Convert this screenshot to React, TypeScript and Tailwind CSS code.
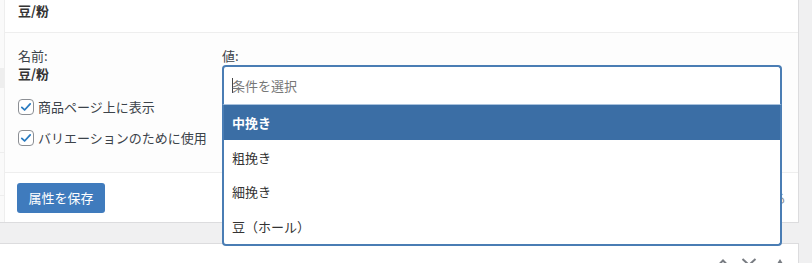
import type { ReactNode } from "react";

const options = ["中挽き", "粗挽き", "細挽き", "豆（ホール）"];

function CheckRow({ children, className }: { children: ReactNode; className?: string }) {
  return (
    <label className={`flex h-[20px] items-center gap-[4px] text-[13px] leading-[20px] text-[#3c434a] ${className ?? ""}`}>
      <span className="flex h-[16px] w-[16px] items-center justify-center rounded-[4px] border border-[#8c8f94] bg-white">
        <svg viewBox="0 0 16 16" className="h-[14px] w-[14px]">
          <path d="M3.2 8.4 6.4 11.4 12.8 4.4" fill="none" stroke="#2a7bc0" strokeWidth="2" strokeLinecap="round" strokeLinejoin="round" />
        </svg>
      </span>
      {children}
    </label>
  );
}

function HandleIcon({ kind }: { kind: "up" | "down" | "toggle" }) {
  return (
    <svg viewBox="0 0 20 20" className="h-[20px] w-[20px]">
      {kind === "up" && <path d="M5 13.5 10 8.5 15 13.5" fill="none" stroke="#787c82" strokeWidth="2" />}
      {kind === "down" && <path d="M3.5 7 10 13 16.5 7" fill="none" stroke="#787c82" strokeWidth="2" />}
      {kind === "toggle" && <path d="M6 13.5 10 7 14 13.5Z" fill="#787c82" />}
    </svg>
  );
}

export default function App() {
  return (
    <div className="h-[263px] w-[812px] overflow-hidden bg-[#f0f0f1] font-['Noto_Sans_CJK_JP','Noto_Sans',sans-serif]">
      {/* product data box */}
      <div className="flex w-[799px] border-r border-b border-[#dcdcde] bg-white">
        {/* tabs column (cut off) */}
        <div className="flex w-[5px] flex-col border-r border-[#eee] bg-[#fafafa]">
          <div className="h-[68px]" />
          <div className="h-[20px] bg-[#eee]" />
          <div className="h-[65px] border-b border-[#eee]" />
          <div className="h-[43px] border-b border-[#eee]" />
        </div>

        <div className="flex flex-1 flex-col">
          <div className="h-[33px] border-b border-[#eee] pt-[3px] pl-[13px] text-[13px] font-bold leading-[16px] text-[#333]">
            豆/粉
          </div>

          <div className="flex h-[140px] border-b border-[#eee] bg-[#fdfdfd] pt-[14px]">
            <div className="w-[217px] pl-[13px]">
              <div className="text-[13px] leading-[18px] text-[#3c434a]">名前:</div>
              <div className="text-[13px] font-bold leading-[18px] text-[#333]">豆/粉</div>
              <CheckRow className="mt-[14px]">商品ページ上に表示</CheckRow>
              <CheckRow className="mt-[11px]">バリエーションのために使用</CheckRow>
            </div>

            <div className="relative z-10 flex-1 pr-[16px]">
              <div className="text-[13px] leading-[18px] text-[#3c434a]">値:</div>
              <div className="relative">
                <div className="flex h-[40px] items-center rounded-t-[4px] border-x-2 border-t-2 border-b border-[#4a7db4] border-b-[#a9c2dd] bg-white pl-[8px] text-[13px] text-[#777]">
                  <span className="-mr-[1px] h-[15px] w-[1px] bg-[#444]" />
                  条件を選択
                </div>
                <ul className="absolute top-full right-0 left-0 rounded-b-[4px] border-x-2 border-b-2 border-[#4a7db4] bg-white">
                  {options.map((o, i) => (
                    <li
                      key={o}
                      className={`flex items-center pl-[8px] text-[13px] ${i === 2 ? "h-[34px]" : "h-[35px]"} ${
                        i === 0 ? "bg-[#3b6ea5] font-bold text-white" : "text-[#333]"
                      }`}
                    >
                      {o}
                    </li>
                  ))}
                </ul>
              </div>
            </div>
          </div>

          <div className="flex h-[49px] items-start justify-between pt-[10px] pl-[12px] pr-[12px]">
            <button className="flex h-[30px] w-[88px] items-center justify-center rounded-[3px] bg-[#3f7bbd] text-[13px] text-white">
              属性を保存
            </button>
            <span className="text-[13px] leading-[30px] text-[#8a8d91]">展開 / 閉じる</span>
          </div>
        </div>
      </div>

      {/* next box header */}
      <div className="mt-[20px] flex h-[36px] w-[799px] justify-end border-t border-r border-[#dcdcde] bg-white">
        <div className="flex h-[36px] w-[26px] items-center justify-center">
          <HandleIcon kind="up" />
        </div>
        <div className="flex h-[36px] w-[26px] items-center justify-center">
          <HandleIcon kind="down" />
        </div>
        <div className="flex h-[36px] w-[36px] items-center justify-center">
          <HandleIcon kind="toggle" />
        </div>
      </div>
    </div>
  );
}
